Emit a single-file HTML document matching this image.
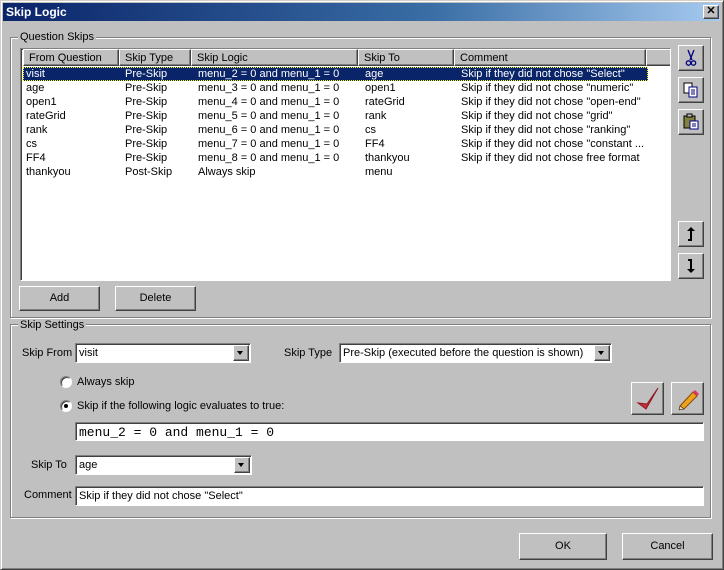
<!DOCTYPE html>
<html><head><meta charset="utf-8"><style>
*{box-sizing:border-box;margin:0;padding:0}
body{width:724px;height:570px;background:#c0c0c0;font-family:"Liberation Sans",sans-serif;font-size:11px;color:#000;position:relative;overflow:hidden}
.win{position:absolute;left:0;top:0;width:724px;height:570px;border:1px solid;border-color:#d4d0c8 #404040 #404040 #d4d0c8;box-shadow:inset 1px 1px #fff,inset -1px -1px #808080;background:#c0c0c0}
.title{position:absolute;left:3px;top:3px;width:717px;height:18px;background:linear-gradient(90deg,#0a246a,#3a6ea5 60%,#a6caf0);color:#fff;font-weight:bold;font-size:12px;line-height:18px;padding-left:3px}
.btn{position:absolute;background:#c0c0c0;border:1px solid;border-color:#fff #404040 #404040 #fff;box-shadow:inset -1px -1px #808080;text-align:center}
.grp{position:absolute;border:1px solid #808080;box-shadow:1px 1px #fff,inset 1px 1px #fff}
.lbl{position:absolute;background:#c0c0c0;padding:0 2px;line-height:12px}
.sunk{position:absolute;background:#fff;border:1px solid;border-color:#808080 #fff #fff #808080;box-shadow:inset 1px 1px #404040}
.hd{position:absolute;top:0;height:17px;line-height:16px;padding-left:5px;background:#c0c0c0;border:1px solid;border-color:#fff #404040 #404040 #fff;box-shadow:inset -1px -1px #808080}
.row{position:absolute;left:2px;height:14px;line-height:14px;width:625px}
.row span{position:absolute;top:0;white-space:nowrap}
.dd{position:absolute;right:1px;top:1px;width:16px;height:16px;background:#c0c0c0;border:1px solid;border-color:#fff #404040 #404040 #fff;box-shadow:inset -1px -1px #808080}
.dd:after{content:"";position:absolute;left:3px;top:5px;border:3.5px solid transparent;border-top:4px solid #000;border-bottom:0}
.t{position:absolute;line-height:13px;white-space:nowrap}
.rad{position:absolute;width:12px;height:12px;border-radius:50%;background:#fff;border:1px solid;border-color:#808080 #fff #fff #808080;box-shadow:inset 1px 1px #404040}
</style></head><body>
<div class="win"></div>
<div class="title">Skip Logic</div>
<div class="btn" style="left:703px;top:5px;width:16px;height:14px;line-height:11px;font-weight:bold;font-size:11px">✕</div>

<div class="grp" style="left:10px;top:37px;width:701px;height:281px"></div>
<div class="lbl" style="left:18px;top:31px">Question Skips</div>

<div class="sunk" style="left:20px;top:48px;width:651px;height:233px;overflow:hidden">
<div class="hd" style="left:2px;width:96px">From Question</div>
<div class="hd" style="left:98px;width:72px">Skip Type</div>
<div class="hd" style="left:170px;width:167px">Skip Logic</div>
<div class="hd" style="left:337px;width:96px">Skip To</div>
<div class="hd" style="left:433px;width:192px">Comment</div>
<div class="hd" style="left:625px;width:30px"></div>
<div class="row" style="top:18px;background:#0a246a;color:#fff;outline:1px dotted #ff0;outline-offset:-1px"><span style="left:3px">visit</span><span style="left:102px">Pre-Skip</span><span style="left:175px">menu_2 = 0 and menu_1 = 0</span><span style="left:342px">age</span><span style="left:438px">Skip if they did not chose "Select"</span></div>
<div class="row" style="top:32px"><span style="left:3px">age</span><span style="left:102px">Pre-Skip</span><span style="left:175px">menu_3 = 0 and menu_1 = 0</span><span style="left:342px">open1</span><span style="left:438px">Skip if they did not chose "numeric"</span></div>
<div class="row" style="top:46px"><span style="left:3px">open1</span><span style="left:102px">Pre-Skip</span><span style="left:175px">menu_4 = 0 and menu_1 = 0</span><span style="left:342px">rateGrid</span><span style="left:438px">Skip if they did not chose "open-end"</span></div>
<div class="row" style="top:60px"><span style="left:3px">rateGrid</span><span style="left:102px">Pre-Skip</span><span style="left:175px">menu_5 = 0 and menu_1 = 0</span><span style="left:342px">rank</span><span style="left:438px">Skip if they did not chose "grid"</span></div>
<div class="row" style="top:74px"><span style="left:3px">rank</span><span style="left:102px">Pre-Skip</span><span style="left:175px">menu_6 = 0 and menu_1 = 0</span><span style="left:342px">cs</span><span style="left:438px">Skip if they did not chose "ranking"</span></div>
<div class="row" style="top:88px"><span style="left:3px">cs</span><span style="left:102px">Pre-Skip</span><span style="left:175px">menu_7 = 0 and menu_1 = 0</span><span style="left:342px">FF4</span><span style="left:438px">Skip if they did not chose "constant ...</span></div>
<div class="row" style="top:102px"><span style="left:3px">FF4</span><span style="left:102px">Pre-Skip</span><span style="left:175px">menu_8 = 0 and menu_1 = 0</span><span style="left:342px">thankyou</span><span style="left:438px">Skip if they did not chose free format</span></div>
<div class="row" style="top:116px"><span style="left:3px">thankyou</span><span style="left:102px">Post-Skip</span><span style="left:175px">Always skip</span><span style="left:342px">menu</span></div>
</div>

<div class="btn" style="left:678px;top:45px;width:26px;height:26px"><svg width="24" height="24" viewBox="0 0 24 24"><path d="M9 4 L13 14 M15 4 L11 14" stroke="#000080" stroke-width="1.3" fill="none"/><circle cx="9.5" cy="17" r="2.2" stroke="#000080" stroke-width="1.3" fill="none"/><circle cx="14.5" cy="17" r="2.2" stroke="#000080" stroke-width="1.3" fill="none"/></svg></div>
<div class="btn" style="left:678px;top:77px;width:26px;height:26px"><svg width="24" height="24" viewBox="0 0 24 24"><rect x="5" y="5" width="8" height="10" fill="#fff" stroke="#000"/><rect x="10" y="9" width="8" height="10" fill="#fff" stroke="#000080"/><path d="M12 12h4M12 14h4M12 16h4" stroke="#000080"/></svg></div>
<div class="btn" style="left:678px;top:109px;width:26px;height:26px"><svg width="24" height="24" viewBox="0 0 24 24"><rect x="5" y="6" width="11" height="12" fill="#808040" stroke="#000"/><rect x="8" y="4" width="5" height="3" fill="#c0c0c0" stroke="#000"/><rect x="11" y="11" width="8" height="8" fill="#fff" stroke="#000080"/><path d="M13 14h4M13 16h4" stroke="#000080"/></svg></div>
<div class="btn" style="left:678px;top:221px;width:26px;height:26px"><svg width="24" height="24" viewBox="0 0 24 24"><path d="M9 18 h3 v-11" stroke="#000" stroke-width="2" fill="none"/><path d="M8 9 l4-4 4 4z" fill="#000"/></svg></div>
<div class="btn" style="left:678px;top:253px;width:26px;height:26px"><svg width="24" height="24" viewBox="0 0 24 24"><path d="M9 6 h3 v11" stroke="#000" stroke-width="2" fill="none"/><path d="M8 15 l4 4 4-4z" fill="#000"/></svg></div>

<div class="btn" style="left:19px;top:286px;width:81px;height:25px;line-height:22px">Add</div>
<div class="btn" style="left:115px;top:286px;width:81px;height:25px;line-height:22px">Delete</div>

<div class="grp" style="left:10px;top:324px;width:701px;height:194px"></div>
<div class="lbl" style="left:18px;top:319px">Skip Settings</div>

<div class="t" style="left:22px;top:347px">Skip From</div>
<div class="sunk" style="left:75px;top:343px;width:176px;height:20px"><div class="t" style="left:3px;top:3px">visit</div><div class="dd"></div></div>
<div class="t" style="left:284px;top:347px">Skip Type</div>
<div class="sunk" style="left:339px;top:343px;width:273px;height:20px"><div class="t" style="left:3px;top:3px">Pre-Skip (executed before the question is shown)</div><div class="dd"></div></div>

<div class="rad" style="left:60px;top:376px"></div>
<div class="t" style="left:77px;top:376px">Always skip</div>
<div class="rad" style="left:60px;top:400px"><div style="position:absolute;left:3px;top:3px;width:4px;height:4px;background:#000;border-radius:50%"></div></div>
<div class="t" style="left:77px;top:400px">Skip if the following logic evaluates to true:</div>

<div class="btn" style="left:631px;top:382px;width:33px;height:33px"><svg width="31" height="31" viewBox="0 0 31 31"><path d="M6 20 L14 26 L26 5 L15 21 Z" fill="#c0303a" stroke="#901820" stroke-width="1"/></svg></div>
<div class="btn" style="left:671px;top:382px;width:33px;height:33px"><svg width="31" height="31" viewBox="0 0 31 31"><path d="M8 23 L21 9 L25 13 L12 26 Z" fill="#f0a020" stroke="#805000"/><path d="M21 9 L23 7 L27 11 L25 13Z" fill="#e03070"/><path d="M8 23 L7 27 L12 26Z" fill="#f0d8a0" stroke="#000" stroke-width=".5"/></svg></div>

<div class="sunk" style="left:75px;top:422px;width:629px;height:19px"><div class="t" style="left:3px;top:3px;font-family:'Liberation Mono',monospace;font-size:13px">menu_2 = 0 and menu_1 = 0</div></div>

<div class="t" style="left:31px;top:459px">Skip To</div>
<div class="sunk" style="left:75px;top:455px;width:177px;height:20px"><div class="t" style="left:3px;top:3px">age</div><div class="dd"></div></div>

<div class="t" style="left:24px;top:489px">Comment</div>
<div class="sunk" style="left:75px;top:486px;width:629px;height:20px"><div class="t" style="left:3px;top:3px">Skip if they did not chose "Select"</div></div>

<div class="btn" style="left:519px;top:533px;width:88px;height:27px;line-height:24px">OK</div>
<div class="btn" style="left:622px;top:533px;width:91px;height:27px;line-height:24px">Cancel</div>
</body></html>
